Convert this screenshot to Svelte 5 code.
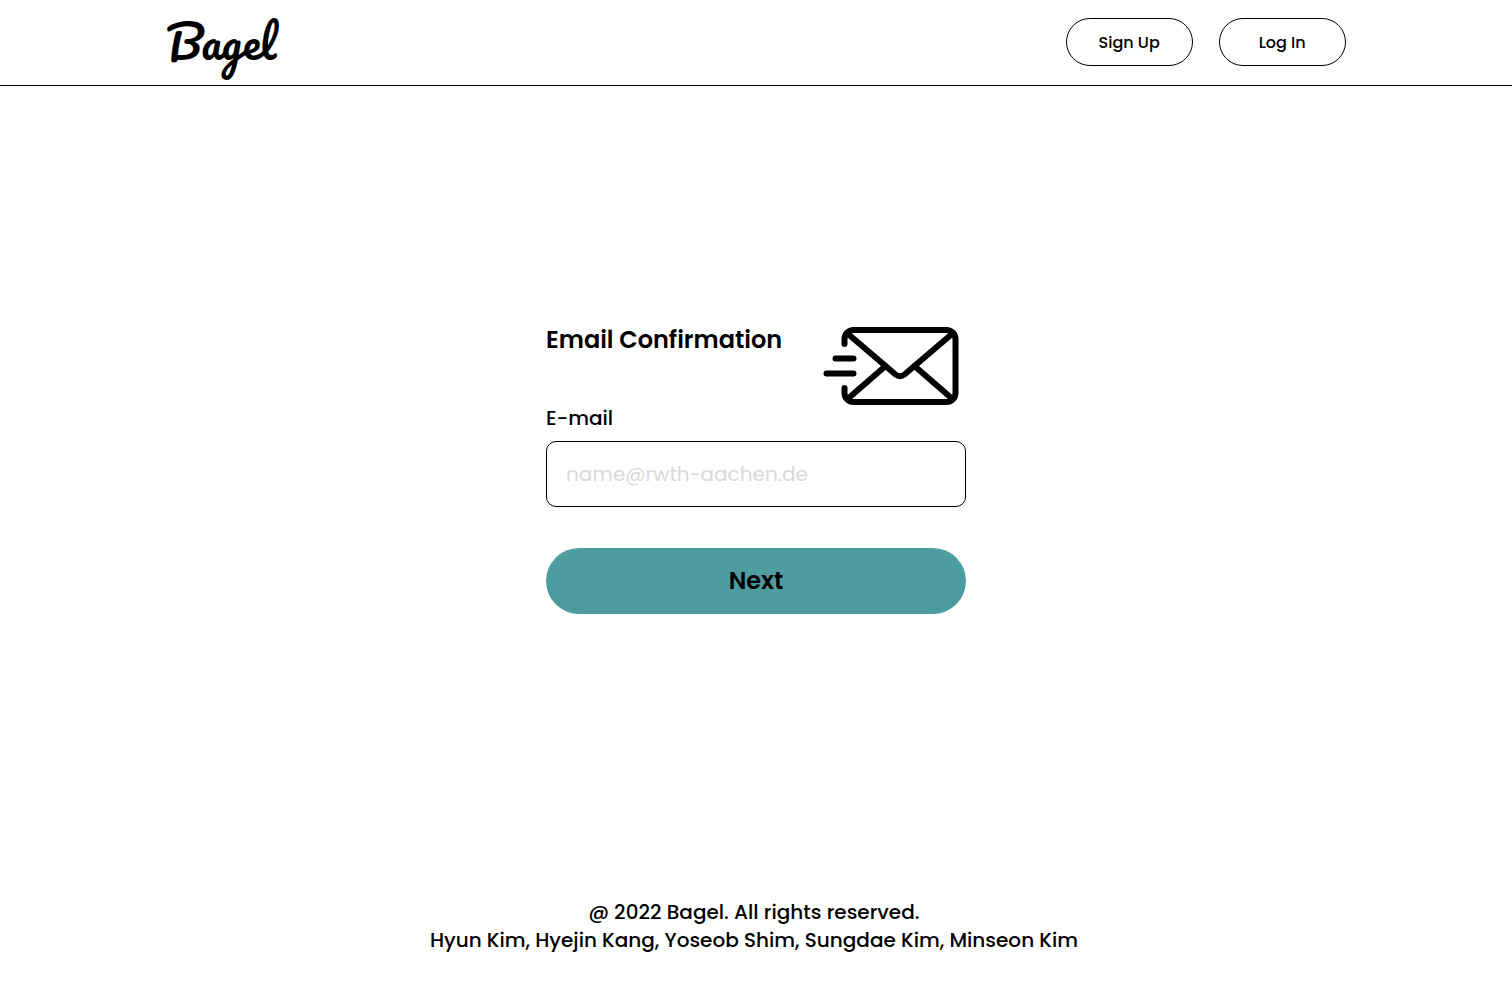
<script>
  let email = $state('');
  const authors = ['Hyun Kim', 'Hyejin Kang', 'Yoseob Shim', 'Sungdae Kim', 'Minseon Kim'];
</script>

<div class="page">
  <header>
    <a class="logo" href="/">Bagel</a>
    <nav>
      <button type="button">Sign Up</button>
      <button type="button">Log In</button>
    </nav>
  </header>

  <main>
    <form onsubmit={(e) => e.preventDefault()}>
      <div class="heading">
        <h1>Email Confirmation</h1>
        <svg width="138" height="80" viewBox="0 0 138 80" fill="none" stroke="#000" stroke-width="6" stroke-linecap="round" stroke-linejoin="round" aria-hidden="true">
          <path d="M21.500 18V13A9 9 0 0 1 30.500 4H123.500A9 9 0 0 1 132.500 13V67A9 9 0 0 1 123.500 76H30.500A9 9 0 0 1 21.500 67V62" />
          <path d="M24.500 7.500L72.500 48.500Q77 52 81.500 48.500L129.500 7.500" />
          <path d="M24.500 73L62.500 40M91.500 40L129.500 73" />
          <path d="M12.500 32.500H30.500M3.500 47.500H30.500" />
        </svg>
      </div>
      <label for="email">E-mail</label>
      <input id="email" type="email" placeholder="name@rwth-aachen.de" bind:value={email} />
      <button class="next" type="submit">Next</button>
    </form>
  </main>

  <footer>
    <p>@ 2022 Bagel. All rights reserved.</p>
    <p>{authors.join(', ')}</p>
  </footer>
</div>

<style>
  :global(body) {
    margin: 0;
    background: #fff;
  }
  .page {
    display: flex;
    flex-direction: column;
    min-height: 100vh;
    color: #000;
    font-family: Poppins, Inter, sans-serif;
  }
  .page * {
    box-sizing: border-box;
  }
  header {
    display: flex;
    justify-content: space-between;
    align-items: center;
    padding: 18px 11% 19px;
    border-bottom: 1px solid #000;
  }
  .logo {
    color: #000;
    font: 400 44px/48px Pacifico, Lato, cursive;
    text-decoration: none;
  }
  nav {
    display: flex;
    gap: 26px;
  }
  button {
    padding: 0;
    color: #000;
    font-family: inherit;
    cursor: pointer;
  }
  nav button {
    width: 127px;
    height: 48px;
    border: 1px solid #000;
    border-radius: 24px;
    background: #fff;
    font-size: 16px;
    font-weight: 500;
  }
  main {
    display: flex;
    flex: 1;
    justify-content: center;
    align-items: flex-start;
    padding: 240px 24px 48px;
  }
  form {
    display: flex;
    flex-direction: column;
    width: 100%;
    max-width: 420px;
  }
  .heading {
    display: flex;
    justify-content: space-between;
    align-items: flex-start;
    padding-right: 5px;
  }
  h1 {
    margin: 0;
    font-size: 24px;
    font-weight: 600;
    line-height: 28px;
  }
  label {
    margin-bottom: 11px;
    font-size: 20px;
    line-height: 24px;
    font-weight: 500;
  }
  input {
    width: 100%;
    height: 66px;
    padding: 0 19px;
    border: 1px solid #000;
    border-radius: 10px;
    background: #fff;
    color: #000;
    font-family: inherit;
    font-size: 20px;
  }
  input::placeholder {
    color: #d9d9d9;
    opacity: 1;
  }
  .next {
    height: 66px;
    margin-top: 41px;
    padding-bottom: 2px;
    border: 0;
    border-radius: 33px;
    background: #4d9da0;
    font-size: 24px;
    font-weight: 600;
  }
  footer {
    padding: 0 28px 28px 24px;
    text-align: center;
    font-size: 20px;
    font-weight: 500;
    line-height: 28px;
  }
  footer p {
    margin: 0;
  }
</style>
